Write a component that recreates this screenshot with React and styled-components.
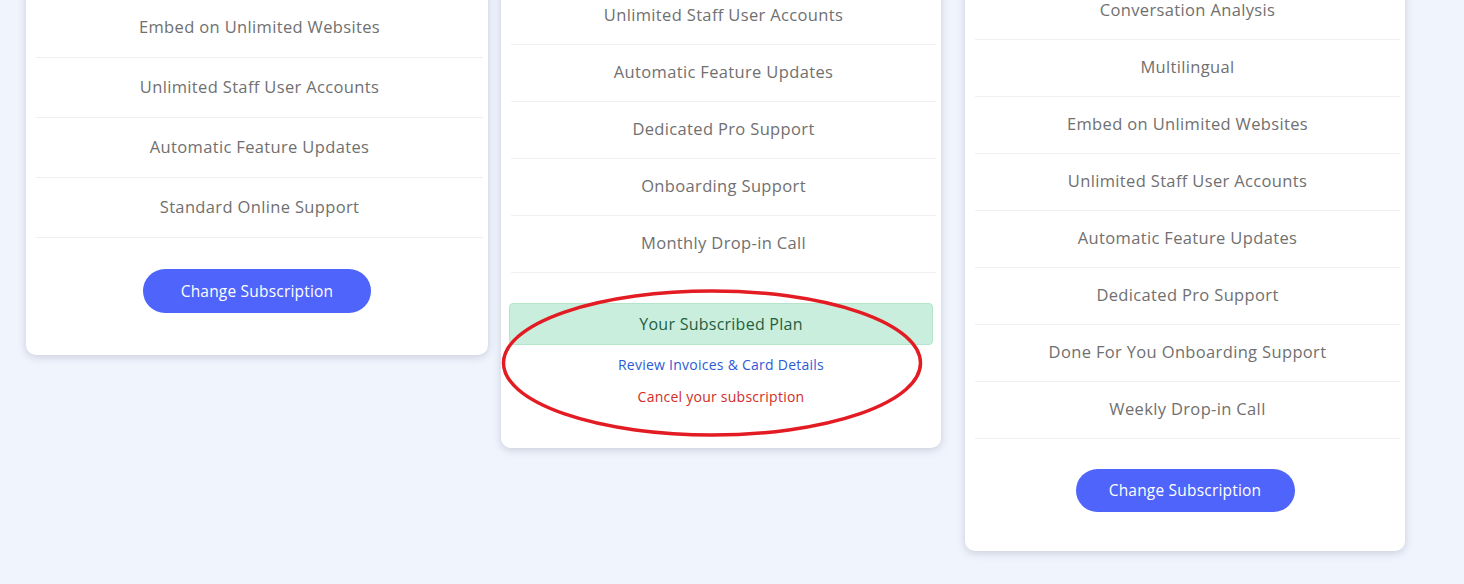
import React from 'react';
import styled, { createGlobalStyle } from 'styled-components';

const GlobalStyle = createGlobalStyle`
  html, body {
    margin: 0;
    background: #f0f4fd;
    font-family: "Open Sans", "Liberation Sans", sans-serif;
    overflow: hidden;
  }
`;

const Page = styled.div`
  position: relative;
  height: 584px;
  display: flex;
  align-items: flex-start;
  padding-left: 26px;
`;

const Card = styled.div`
  width: ${p => p.$width}px;
  margin-top: ${p => p.$top}px;
  margin-left: ${p => p.$left || 0}px;
  background: #fff;
  border-radius: 10px;
  box-shadow: 0 2px 8px rgba(60, 70, 100, 0.22);
  padding: 0 5px ${p => p.$bottom}px 10px;
  box-sizing: border-box;
`;

const FeatureList = styled.ul`
  list-style: none;
  margin: 0;
  padding: 0;
`;

const Feature = styled.li`
  height: ${p => p.$h}px;
  display: flex;
  align-items: center;
  justify-content: center;
  padding-bottom: 3px;
  border-bottom: 1px solid #efefef;
  box-sizing: border-box;
  color: #707070;
  font-size: 16.5px;
  letter-spacing: 0.35px;
`;

const Action = styled.div`
  display: flex;
  justify-content: center;
  padding-top: ${p => p.$pt}px;
  margin-left: -5px;
`;

const Button = styled.button`
  width: ${p => p.$w}px;
  height: ${p => p.$h}px;
  border: none;
  border-radius: 22px;
  background: #4e64fb;
  color: #fff;
  font-family: inherit;
  font-size: 15.5px;
  font-weight: 500;
  letter-spacing: 0.2px;
  padding-bottom: 2px;
  cursor: pointer;
`;

const Current = styled.div`
  display: flex;
  flex-direction: column;
  align-items: center;
  padding-top: 30px;
  margin: 0 3px 0 -2px;
`;

const PlanBadge = styled.div`
  align-self: stretch;
  height: 42px;
  display: flex;
  align-items: center;
  justify-content: center;
  padding-bottom: 1px;
  background: #c9eedd;
  border: 1px solid #b5e4cc;
  border-radius: 4px;
  box-sizing: border-box;
  color: #1f5f3d;
  font-size: 16px;
  letter-spacing: 0.25px;
`;

const TextLink = styled.a`
  display: block;
  margin-top: ${p => p.$mt}px;
  font-size: 14px;
  line-height: 20px;
  letter-spacing: 0.25px;
  color: ${p => p.$color};
  text-decoration: none;
  cursor: pointer;
`;

const Mark = styled.svg`
  position: absolute;
  left: 498px;
  top: 287px;
  pointer-events: none;
`;

const basic = ['Multilingual', 'Embed on Unlimited Websites', 'Unlimited Staff User Accounts', 'Automatic Feature Updates', 'Standard Online Support'];
const pro = ['Embed on Unlimited Websites', 'Unlimited Staff User Accounts', 'Automatic Feature Updates', 'Dedicated Pro Support', 'Onboarding Support', 'Monthly Drop-in Call'];
const agency = ['Advanced Reporting', 'Conversation Analysis', 'Multilingual', 'Embed on Unlimited Websites', 'Unlimited Staff User Accounts', 'Automatic Feature Updates', 'Dedicated Pro Support', 'Done For You Onboarding Support', 'Weekly Drop-in Call'];

export default function App() {
  return (
    <>
      <GlobalStyle />
      <Page>
        <Card $width={462} $top={-62} $bottom={42}>
          <FeatureList>
            {basic.map(f => <Feature key={f} $h={60}>{f}</Feature>)}
          </FeatureList>
          <Action $pt={31}>
            <Button $w={228} $h={44}>Change Subscription</Button>
          </Action>
        </Card>

        <Card $width={440} $top={-69} $left={13} $bottom={41}>
          <FeatureList>
            {pro.map(f => <Feature key={f} $h={57}>{f}</Feature>)}
          </FeatureList>
          <Current>
            <PlanBadge>Your Subscribed Plan</PlanBadge>
            <TextLink $mt={10} $color="#2d5bd6">Review Invoices &amp; Card Details</TextLink>
            <TextLink $mt={12} $color="#cf2d27">Cancel your subscription</TextLink>
          </Current>
        </Card>

        <Card $width={440} $top={-74} $left={24} $bottom={39}>
          <FeatureList>
            {agency.map(f => <Feature key={f} $h={57}>{f}</Feature>)}
          </FeatureList>
          <Action $pt={30}>
            <Button $w={219} $h={43}>Change Subscription</Button>
          </Action>
        </Card>

        <Mark width="430" height="154" viewBox="0 0 430 154">
          <ellipse cx="214" cy="76" rx="208.5" ry="72" fill="none" stroke="#e31b23" strokeWidth="3.5" />
        </Mark>
      </Page>
    </>
  );
}
